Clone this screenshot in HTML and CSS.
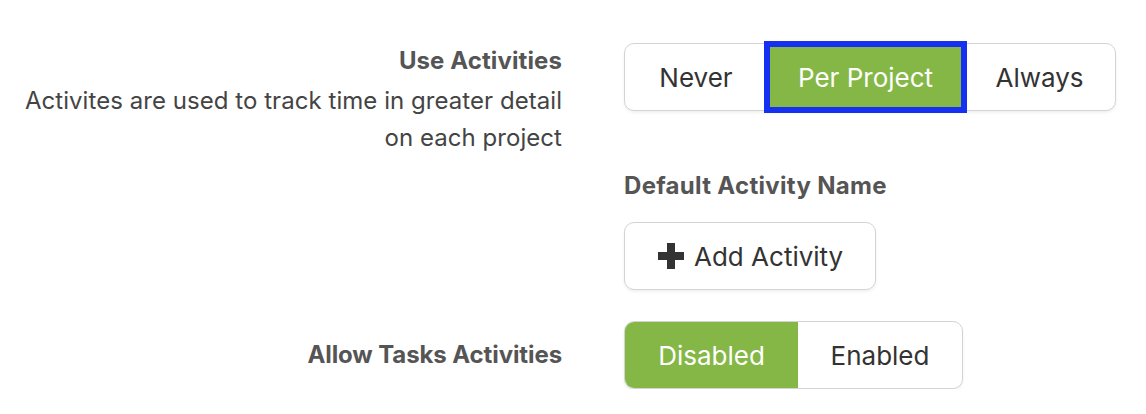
FILE: index.html
```html
<!DOCTYPE html>
<html>
<head>
<meta charset="utf-8">
<link rel="stylesheet" href="styles.css">
</head>
<body>
<div class="settings">
  <div class="label-col">
    <div class="label">Use Activities</div>
    <div class="desc">Activites are used to track time in greater detail on each project</div>
  </div>
  <div class="control-col">
    <div class="seg seg-top">
      <button class="seg-btn never">Never</button>
      <button class="seg-btn per active focused">Per Project</button>
      <button class="seg-btn always">Always</button>
    </div>
  </div>

  <div class="label-col"></div>
  <div class="control-col">
    <div class="sub-label">Default Activity Name</div>
    <button class="add-btn"><svg class="plus" viewBox="0 0 26 26" width="26" height="26"><path d="M9 0h8v9h9v8h-9v9h-8v-9h-9v-8h9z" fill="#333"/></svg>Add Activity</button>
  </div>

  <div class="label-col center">
    <div class="label tight">Allow Tasks Activities</div>
  </div>
  <div class="control-col">
    <div class="seg seg-bottom">
      <button class="seg-btn disabled active">Disabled</button>
      <button class="seg-btn enabled">Enabled</button>
    </div>
  </div>
</div>
</body>
</html>
```

FILE: styles.css
```css
html, body {
  margin: 0;
  padding: 0;
  background: #fff;
}
body {
  font-family: "Inter", "Noto Sans", sans-serif;
  color: #333;
}
.settings {
  display: grid;
  grid-template-columns: 562px 1fr;
  column-gap: 62px;
  padding-top: 43px;
}
.label-col {
  text-align: right;
}
.label-col.center {
  display: flex;
  flex-direction: column;
  justify-content: center;
  padding-top: 31px;
}
.label {
  font-weight: 700;
  font-size: 24px;
  color: #555;
  line-height: 36px;
  letter-spacing: 0.1px;
}
.label.tight {
  letter-spacing: -0.1px;
}
.desc {
  margin-top: 3px;
  font-size: 24px;
  line-height: 37px;
  color: #444;
  letter-spacing: 0.05px;
  padding-left: 20px;
}
.control-col {
  display: flex;
  flex-direction: column;
  align-items: flex-start;
}
.seg {
  display: flex;
  border: 1px solid #d4d4d4;
  border-radius: 10px;
  box-shadow: 0 2px 3px rgba(0,0,0,0.06);
  background: #fff;
}
.seg-btn {
  font-family: inherit;
  font-size: 26px;
  color: #333;
  background: transparent;
  border: none;
  padding: 0;
  height: 66px;
  cursor: pointer;
}
.seg-btn.active {
  background: #84b745;
  color: #fff;
}
.never { width: 142px; border-radius: 9px 0 0 9px; }
.per { width: 197px; }
.always { width: 151px; border-radius: 0 9px 9px 0; }
.focused {
  outline: 6px solid #1530f0;
  outline-offset: -3px;
}
.seg-bottom {
  margin-top: 31px;
}
.disabled { width: 173px; border-radius: 9px 0 0 9px; }
.enabled { width: 164px; border-radius: 0 9px 9px 0; }
.sub-label {
  margin-top: 15px;
  font-size: 24px;
  font-weight: 700;
  color: #555;
  line-height: 30px;
  letter-spacing: 0.3px;
}
.add-btn {
  margin-top: 21px;
  display: flex;
  align-items: center;
  gap: 10px;
  font-family: inherit;
  font-size: 26px;
  color: #333;
  background: #fff;
  border: 1px solid #d4d4d4;
  border-radius: 10px;
  box-shadow: 0 2px 3px rgba(0,0,0,0.06);
  height: 68px;
  width: 252px;
  padding: 0 0 0 33px;
}
.plus {
  flex: none;
  width: 26px;
  height: 26px;
}
```
